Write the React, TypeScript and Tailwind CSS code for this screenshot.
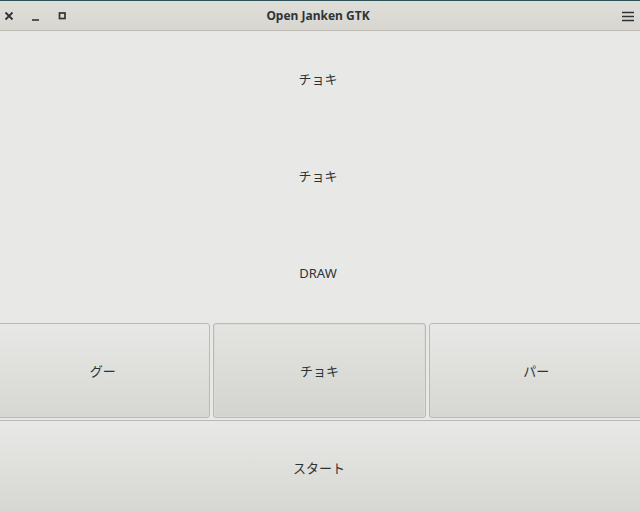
import React from "react";

const font = { fontFamily: '"Noto Sans", "Noto Sans CJK JP", sans-serif' };

const HandButton = ({ label, active }: { label: string; active?: boolean }) => (
    <button
        className={
            "flex-1 flex items-center justify-center pt-[2px] rounded-[3px] border border-[#b9b9b5] text-[13px] text-[#2e3436] " +
            (active
                ? "bg-gradient-to-b from-[#e4e4e1] to-[#d3d3cf] shadow-[inset_0_0_0_1px_#dadad6]"
                : "bg-gradient-to-b from-[#e8e8e6] to-[#d6d6d2]")
        }
    >
        {label}
    </button>
);

export default function App() {
    return (
        <div className="w-[640px] h-[512px] overflow-hidden bg-[#e8e8e6] flex flex-col" style={font}>
            <div className="h-[31px] shrink-0 border-t border-t-[#2b5157] border-b border-b-[#bdbab4] bg-gradient-to-b from-[#e0ded9] to-[#d8d6d1] flex items-center pl-[2px] pr-[5px] relative">
                <div className="flex items-center gap-[13px] text-[#2e3436]">
                    <svg width="14" height="14" viewBox="0 0 14 14">
                        <path d="M3.5 3.5 L10.5 10.5 M10.5 3.5 L3.5 10.5" stroke="#2e3436" strokeWidth="1.8" />
                    </svg>
                    <svg width="14" height="14" viewBox="0 0 14 14">
                        <path d="M3 11 H10" stroke="#2e3436" strokeWidth="1.6" />
                    </svg>
                    <svg width="14" height="14" viewBox="0 0 14 14">
                        <rect x="3.5" y="4" width="5.5" height="5.5" fill="none" stroke="#2e3436" strokeWidth="1.7" />
                    </svg>
                </div>
                <div className="absolute inset-0 pr-[4px] flex items-center justify-center text-[12px] font-bold text-[#2e3436]">
                    Open Janken GTK
                </div>
                <div className="ml-auto">
                    <svg width="14" height="14" viewBox="0 0 14 14">
                        <path d="M1 3.5 H13 M1 7.5 H13 M1 11.5 H13" stroke="#2e3436" strokeWidth="1.6" />
                    </svg>
                </div>
            </div>

            <div className="h-[97px] shrink-0 pr-[4px] flex items-center justify-center text-[13px] text-[#2e3436]">チョキ</div>
            <div className="h-[97px] shrink-0 pr-[4px] flex items-center justify-center text-[13px] text-[#2e3436]">チョキ</div>
            <div className="h-[97px] shrink-0 pr-[4px] flex items-center justify-center text-[13px] text-[#2e3436]">DRAW</div>

            <div className="h-[95px] shrink-0 flex gap-[3px] -ml-[4px] -mr-[3px] mt-[1px]">
                <HandButton label="グー" />
                <HandButton label="チョキ" active />
                <HandButton label="パー" />
            </div>

            <div className="flex-1 flex -ml-[4px] -mr-[2px] mt-[2px] -mb-[4px]">
                <HandButton label="スタート" />
            </div>
        </div>
    );
}
